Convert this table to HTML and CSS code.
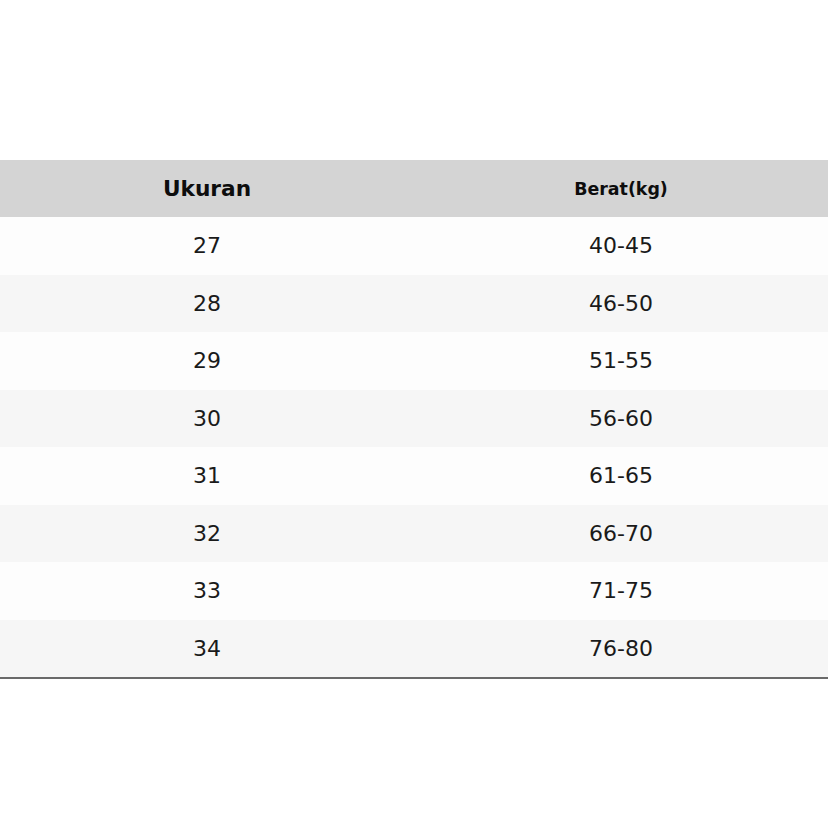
FILE: index.html
```html
<!DOCTYPE html>
<html>
<head>
<meta charset="utf-8">
<link rel="stylesheet" href="styles.css">
</head>
<body>
<div class="page">
<table class="size-table">
<thead>
<tr><th class="h-size">Ukuran</th><th class="h-weight">Berat(kg)</th></tr>
</thead>
<tbody>
<tr><td>27</td><td>40-45</td></tr>
<tr><td>28</td><td>46-50</td></tr>
<tr><td>29</td><td>51-55</td></tr>
<tr><td>30</td><td>56-60</td></tr>
<tr><td>31</td><td>61-65</td></tr>
<tr><td>32</td><td>66-70</td></tr>
<tr><td>33</td><td>71-75</td></tr>
<tr><td>34</td><td>76-80</td></tr>
</tbody>
</table>
</div>
</body>
</html>
```
FILE: styles.css
```css
html, body {
  margin: 0;
  padding: 0;
  background: #fff;
}
.page {
  width: 828px;
  height: 828px;
  padding-top: 160px;
  box-sizing: border-box;
  font-family: "DejaVu Sans", sans-serif;
  color: #1a1a1a;
}
.size-table {
  width: 828px;
  border-collapse: collapse;
  table-layout: fixed;
  border-bottom: 2px solid #6a6a6a;
}
.size-table th {
  background: #d4d4d4;
  height: 57px;
  padding: 0;
  text-align: center;
  vertical-align: middle;
  font-weight: bold;
  color: #0d0d0d;
}
.h-size {
  font-size: 21.7px;
}
.h-weight {
  font-size: 17.4px;
}
.size-table td {
  height: 57.5px;
  padding: 0;
  text-align: center;
  vertical-align: middle;
  font-size: 22px;
}
.size-table tbody tr:nth-child(odd) {
  background: #fdfdfd;
}
.size-table tbody tr:nth-child(even) {
  background: #f6f6f6;
}
```
